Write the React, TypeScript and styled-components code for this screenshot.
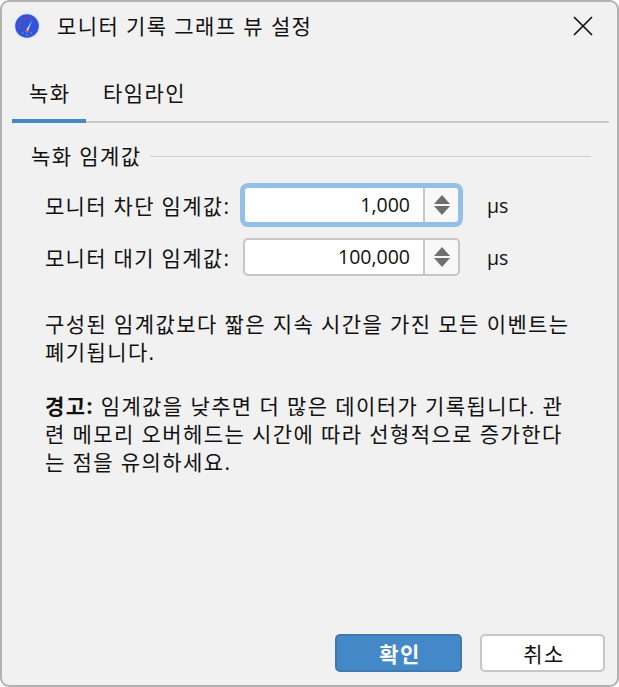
import React from "react";
import styled, { createGlobalStyle } from "styled-components";

const Global = createGlobalStyle`
  html, body { margin: 0; padding: 0; background: #fff; }
  #root { width: 619px; height: 687px; }
  * { box-sizing: border-box; }
`;

const Window = styled.div`
  width: 619px;
  height: 687px;
  background: #f1f1f1;
  border: 2px solid #b2b2b2;
  border-radius: 9px;
  display: flex;
  flex-direction: column;
  font-family: "Open Sans", "Noto Sans CJK KR", sans-serif;
  font-size: 21px;
  letter-spacing: 1.4px;
  color: #111;
  overflow: hidden;
`;

const TitleBar = styled.div`
  height: 48px;
  flex: none;
  display: flex;
  align-items: center;
  padding: 0 24px 0 12px;
`;

const Title = styled.div`
  flex: 1;
  margin-left: 17px;
  line-height: 26px;
`;

const TabBar = styled.div`
  flex: none;
  height: 73px;
  margin: 0 8px 0 10px;
  display: flex;
  align-items: stretch;
  border-bottom: 2px solid #c9c9c9;
  padding-top: 20px;
`;

const Tab = styled.div<{ $active?: boolean }>`
  padding: 9px 0 0 17px;
  width: ${(p) => (p.$active ? "74px" : "auto")};
  white-space: nowrap;
  line-height: 28px;
  margin-bottom: -2px;
  border-bottom: 4px solid ${(p) => (p.$active ? "#4488c7" : "transparent")};
`;

const Body = styled.div`
  flex: 1;
  display: flex;
  flex-direction: column;
  padding: 0 26px 0 29px;
`;

const GroupHead = styled.div`
  display: flex;
  align-items: center;
  gap: 9px;
  margin-top: 20px;
  line-height: 26px;
`;

const GroupLine = styled.div`
  flex: 1;
  height: 1px;
  background: #cfcfcf;
`;

const Rows = styled.div`
  display: flex;
  flex-direction: column;
  gap: 14px;
  margin-top: 17px;
  padding-left: 14px;
`;

const Row = styled.div`
  display: flex;
  align-items: center;
  height: 38px;
`;

const Label = styled.div`
  width: 198px;
  letter-spacing: 1.3px;
`;

const Spin = styled.div<{ $focus?: boolean }>`
  width: 217px;
  height: 38px;
  display: flex;
  background: #fff;
  border: 2px solid ${(p) => (p.$focus ? "#94bfe8" : "#c6c6c6")};
  border-radius: 5px;
  ${(p) => (p.$focus ? "box-shadow: 0 0 0 3px #94bfe8;" : "")}
`;

const SpinValue = styled.div`
  flex: 1;
  text-align: right;
  padding-right: 13px;
  font-size: 19.5px;
  letter-spacing: 0;
  line-height: 34px;
`;

const SpinButtons = styled.div`
  width: 35px;
  flex: none;
  background: #f8f8f8;
  border-left: 2px solid #c6c6c6;
  display: flex;
  align-items: center;
  justify-content: center;
  border-radius: 0 4px 4px 0;
`;

const Unit = styled.div`
  margin-left: 27px;
  font-size: 19.5px;
  letter-spacing: 0;
`;

const Para = styled.p`
  margin: 0;
  padding-left: 14px;
  line-height: 28px;
  width: 560px;
`;

const FirstPara = styled(Para)`
  margin-top: 34px;
`;

const WarnPara = styled(Para)`
  margin-top: 26px;
`;

const Footer = styled.div`
  flex: none;
  display: flex;
  justify-content: flex-end;
  gap: 18px;
  padding: 0 12px 13px 0;
`;

const Primary = styled.div`
  width: 127px;
  height: 38px;
  padding-left: 3px;
  background: #4488c7;
  border: 2px solid #3f79b0;
  border-radius: 5px;
  color: #fff;
  font-weight: 700;
  display: flex;
  align-items: center;
  justify-content: center;
`;

const Secondary = styled(Primary)`
  width: 125px;
  background: #fff;
  border-color: #c6c6c6;
  color: #111;
  font-weight: 400;
`;

const Arrows = () => (
  <svg width="16" height="20" viewBox="0 0 16 20">
    <path d="M8 0 L16 9 H0 Z" fill="#6f6f6f" />
    <path d="M0 11 H16 L8 20 Z" fill="#6f6f6f" />
  </svg>
);

const AppIcon = () => (
  <svg width="26" height="26" viewBox="0 0 26 26">
    <circle cx="13" cy="13" r="13" fill="#dbe7fa" />
    <circle cx="13" cy="13" r="11.8" fill="#2f55d8" />
    <path d="M6 16 A7.6 7.6 0 0 1 18.5 7.5" fill="none" stroke="#8e3fae" strokeWidth="1.2" />
    <path d="M18 7.5 L14 18 L12.2 17.3 Z" fill="#dfe8fb" />
    <circle cx="13" cy="18" r="1.6" fill="#f0633a" />
    <path d="M8 20 H9.5 M12 22 H14 M16.5 20 H18" stroke="#7aa4f0" strokeWidth="1" />
  </svg>
);

const CloseIcon = () => (
  <svg width="20" height="20" viewBox="0 0 20 20">
    <path d="M1 1 L19 19 M19 1 L1 19" stroke="#111" strokeWidth="1.7" fill="none" />
  </svg>
);

export default function App() {
  return (
    <>
      <Global />
      <Window>
        <TitleBar>
          <AppIcon />
          <Title>모니터 기록 그래프 뷰 설정</Title>
          <CloseIcon />
        </TitleBar>
        <TabBar>
          <Tab $active>녹화</Tab>
          <Tab>타임라인</Tab>
        </TabBar>
        <Body>
          <GroupHead>
            녹화 임계값
            <GroupLine />
          </GroupHead>
          <Rows>
            <Row>
              <Label>모니터 차단 임계값:</Label>
              <Spin $focus>
                <SpinValue>1,000</SpinValue>
                <SpinButtons>
                  <Arrows />
                </SpinButtons>
              </Spin>
              <Unit>µs</Unit>
            </Row>
            <Row>
              <Label>모니터 대기 임계값:</Label>
              <Spin>
                <SpinValue>100,000</SpinValue>
                <SpinButtons>
                  <Arrows />
                </SpinButtons>
              </Spin>
              <Unit>µs</Unit>
            </Row>
          </Rows>
          <FirstPara>
            구성된 임계값보다 짧은 지속 시간을 가진 모든 이벤트는
            <br />
            폐기됩니다.
          </FirstPara>
          <WarnPara>
            <b>경고:</b> 임계값을 낮추면 더 많은 데이터가 기록됩니다. 관
            <br />
            련 메모리 오버헤드는 시간에 따라 선형적으로 증가한다
            <br />는 점을 유의하세요.
          </WarnPara>
        </Body>
        <Footer>
          <Primary>확인</Primary>
          <Secondary>취소</Secondary>
        </Footer>
      </Window>
    </>
  );
}
